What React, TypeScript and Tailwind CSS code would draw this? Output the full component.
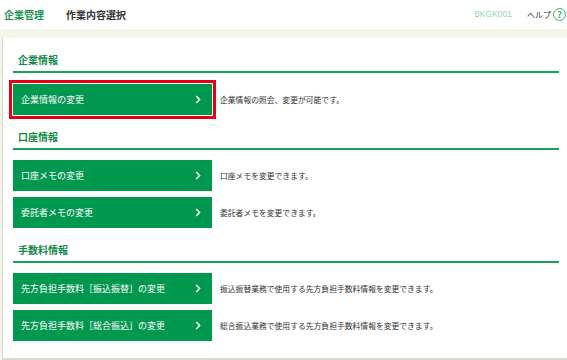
import React from "react";

const Chevron = () => (
  <svg width="6" height="9" viewBox="0 0 6 9" className="shrink-0">
    <polyline points="1.2,1 4.6,4.5 1.2,8" fill="none" stroke="white" strokeWidth="1.5" />
  </svg>
);

type RowProps = { label: string; desc: string; selected?: boolean; gap: "a" | "b" | "c" };

const Row = ({ label, desc, selected, gap }: RowProps) => (
  <div className={`flex items-center ${gap === "a" ? "mt-[11px]" : gap === "b" ? "mt-[10px]" : "mt-[6px]"}`}>
    <div
      className={`w-[199px] h-[31px] bg-[#00984f] flex items-center justify-between pl-[8px] pr-[11px] text-white text-[9px] ${
        selected ? "shadow-[0_0_0_1px_#ffffff,0_0_0_4px_#e60012]" : ""
      }`}
    >
      <span>{label}</span>
      <Chevron />
    </div>
    <span className="ml-[8px] text-[7.8px] text-[#333333]">{desc}</span>
  </div>
);

const Heading = ({ title }: { title: string }) => (
  <div className="mt-[15px] border-b-2 border-[#1ca05a] pb-[4px] pl-[5px] h-[20px] flex items-center">
    <span className="text-[10px] leading-[14px] font-bold text-[#12894a]">{title}</span>
  </div>
);

export default function App() {
  return (
    <div
      className="w-[567px] h-[360px] bg-white overflow-hidden flex flex-col"
      style={{ fontFamily: '"Noto Sans CJK JP", "Noto Sans", sans-serif' }}
    >
      <div className="h-[29px] flex items-center justify-between pl-[4px] pr-[1px]">
        <div className="flex items-center">
          <span className="text-[10px] font-bold text-[#17934f]">企業管理</span>
          <span className="ml-[22px] text-[10px] font-bold text-[#333333]">作業内容選択</span>
        </div>
        <div className="flex items-center">
          <span className="text-[8.5px] text-[#95d4ad]" style={{ fontFamily: '"Liberation Sans", sans-serif' }}>
            BKGK001
          </span>
          <span className="ml-[15px] text-[8px] text-[#333333]">ヘルプ</span>
          <span className="ml-[2px] w-[13px] h-[13px] rounded-full border-[1.5px] border-[#3fae6f] flex items-center justify-center text-[9px] font-bold leading-none text-[#3fae6f]">
            ?
          </span>
        </div>
      </div>
      <div className="h-[9px] bg-[#f4f6ea]" />
      <div className="flex flex-1 bg-[#f4f6ea]">
        <div className="flex-1 ml-[2px] bg-white border-l border-b-2 border-l-[#d9d9d0] border-b-[#d8d8ce] pl-[10px] pr-[8px]">
          <Heading title="企業情報" />
          <Row label="企業情報の変更" desc="企業情報の照会、変更が可能です。" selected gap="a" />
          <Heading title="口座情報" />
          <Row label="口座メモの変更" desc="口座メモを変更できます。" gap="b" />
          <Row label="委託者メモの変更" desc="委託者メモを変更できます。" gap="c" />
          <Heading title="手数料情報" />
          <Row
            label="先方負担手数料［振込振替］の変更"
            desc="振込振替業務で使用する先方負担手数料情報を変更できます。"
            gap="b"
          />
          <Row
            label="先方負担手数料［総合振込］の変更"
            desc="総合振込業務で使用する先方負担手数料情報を変更できます。"
            gap="c"
          />
        </div>
      </div>
    </div>
  );
}
